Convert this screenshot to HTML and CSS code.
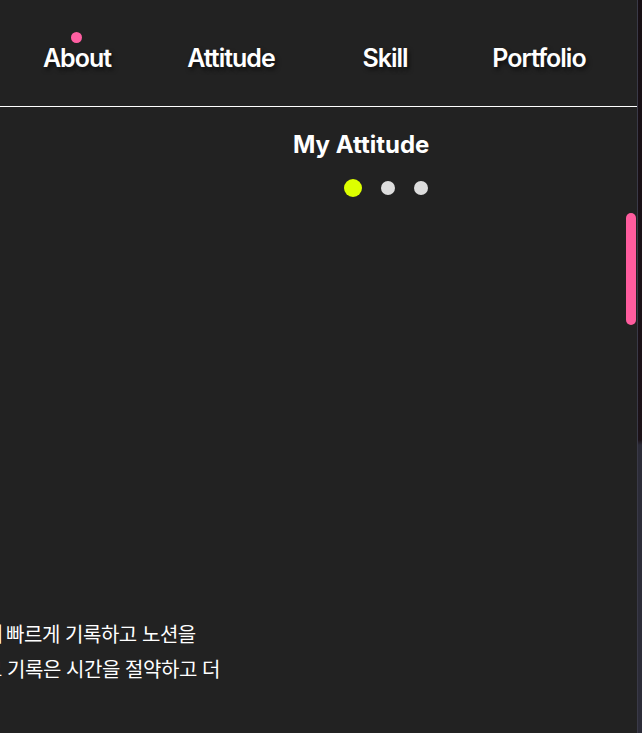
FILE: index.html
```html
<!DOCTYPE html>
<html lang="ko">
<head>
<meta charset="utf-8">
<title>My Attitude</title>
<link rel="stylesheet" href="styles.css">
</head>
<body>
<div class="page">
  <div class="main">
    <header class="nav">
      <a class="nav-item active">About</a>
      <a class="nav-item">Attitude</a>
      <a class="nav-item">Skill</a>
      <a class="nav-item">Portfolio</a>
    </header>
    <section class="attitude">
      <div class="heading">
        <h2 class="title">My Attitude</h2>
        <div class="dots">
          <span class="dot on"></span>
          <span class="dot"></span>
          <span class="dot"></span>
        </div>
      </div>
    </section>
    <div class="desc">
      <p class="line l1"><span class="lead">신속히 </span>빠르게 기록하고 노션을</p>
      <p class="line l2">하고 기록은 시간을 절약하고 더</p>
    </div>
    <div class="thumb"></div>
  </div>
  <div class="edge"></div>
</div>
</body>
</html>
```
FILE: styles.css
```css
html, body {
  margin: 0;
  padding: 0;
  background: #222222;
  overflow: hidden;
}
.page {
  display: flex;
  width: 642px;
  height: 733px;
}
.main {
  position: relative;
  width: 637px;
  height: 733px;
  display: flex;
  flex-direction: column;
  overflow: hidden;
  font-family: Inter, "Noto Sans", sans-serif;
  color: #ffffff;
}
.nav {
  display: grid;
  grid-template-columns: repeat(4, 154px);
  height: 106px;
  border-bottom: 1px solid #ffffff;
  box-sizing: content-box;
}
.nav-item {
  position: relative;
  display: flex;
  align-items: center;
  justify-content: center;
  padding-top: 10px;
  font-size: 25px;
  font-weight: 600;
  letter-spacing: -1px;
  color: #ffffff;
  text-shadow: 2px 3px 4px rgba(0, 0, 0, 0.55);
}
.nav-item.active::before {
  content: "";
  position: absolute;
  left: 71px;
  top: 32px;
  width: 11px;
  height: 11px;
  border-radius: 50%;
  background: #ff5fa2;
}
.attitude {
  padding-left: 293px;
  padding-top: 23px;
}
.heading {
  display: inline-flex;
  flex-direction: column;
  align-items: flex-end;
}
.title {
  margin: 0;
  font-size: 24px;
  line-height: 30px;
  font-weight: 700;
  letter-spacing: 0;
}
.dots {
  display: flex;
  align-items: center;
  gap: 19px;
  margin-top: 19px;
  margin-right: 1px;
}
.dot {
  width: 14px;
  height: 14px;
  border-radius: 50%;
  background: #dddddd;
}
.dot.on {
  width: 18px;
  height: 18px;
  background: #ddff00;
}
.desc {
  margin-top: auto;
  margin-bottom: 47px;
  font-family: "Noto Sans CJK KR", sans-serif;
  font-size: 20px;
  letter-spacing: -0.45px;
  line-height: 35px;
}
.line {
  margin: 0;
  white-space: nowrap;
}
.l1 { margin-left: -51px; }
.lead { word-spacing: -2px; }
.l2 { margin-left: -34px; }
.thumb {
  position: absolute;
  left: 626px;
  top: 213px;
  width: 10px;
  height: 112px;
  border-radius: 5px;
  background: #ff5c9e;
}
.edge {
  width: 5px;
  height: 733px;
  background: linear-gradient(to bottom, #170f14 0, #1c1218 440px, #2c2c38 445px, #2c2c38 100%);
  box-shadow: inset 1px 0 0 #3a3a48;
}
```
